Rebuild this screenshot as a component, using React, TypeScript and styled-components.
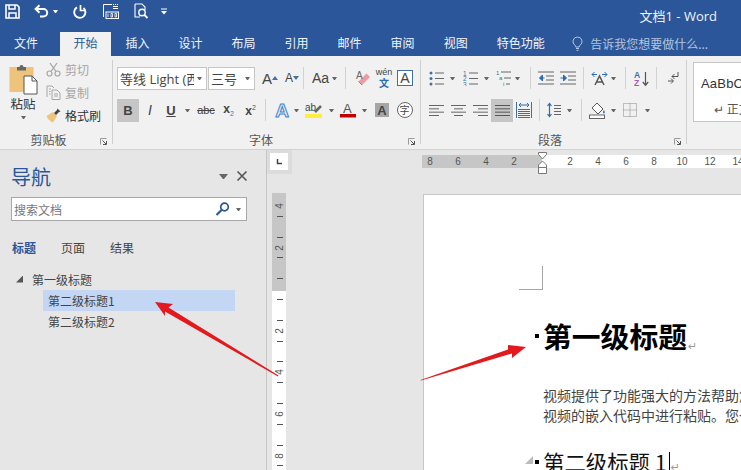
import React from "react";
import styled, { createGlobalStyle } from "styled-components";

const Global = createGlobalStyle`
  html, body { margin: 0; padding: 0; background: #e6e6e6; overflow: hidden; }
  * { box-sizing: border-box; }
`;

const CJK = `"Noto Sans CJK SC", "Open Sans", sans-serif`;
const LATIN = `"Open Sans", "Noto Sans CJK SC", sans-serif`;

const Root = styled.div`
  position: relative; width: 741px; height: 470px; overflow: hidden;
  display: flex; flex-direction: column; background: #e6e6e6; font-family: ${CJK};
  color: #444; font-size: 12px;
`;
const TitleBar = styled.div`
  height: 32px; flex: none; background: #2b579a; display: flex; align-items: center; color: #fff;
  padding-left: 5px; padding-bottom: 10px;
`;
const WindowTitle = styled.div`
  margin-left: auto; margin-right: 24px; margin-top: 8px; font-family: ${LATIN}; font-size: 13px; color: #f1f4f9; white-space: nowrap;
`;
const TabBar = styled.div`
  height: 24px; flex: none; background: #2b579a; display: flex; align-items: stretch;
`;
const Tab = styled.div<{ $active?: boolean; $first?: boolean }>`
  display: flex; align-items: center; font-size: 12px; white-space: nowrap;
  padding: ${(p) => (p.$first ? "0 22px 3px 14px" : p.$active ? "0 13.5px 3px" : "0 14.5px 3px")};
  background: ${(p) => (p.$active ? "#f1f1f1" : "transparent")};
  color: ${(p) => (p.$active ? "#2b579a" : "#f2f5fa")};
`;
const TellMe = styled.div`
  display: flex; align-items: center; gap: 7px; margin-left: 13px; padding-bottom: 2px; color: #b4c4de; font-size: 12px; white-space: nowrap;
`;
const Ribbon = styled.div`
  height: 94px; flex: none; background: #f1f1f1; border-bottom: 1px solid #d2d2d2; display: flex; align-items: stretch; overflow: hidden;
`;
const Group = styled.section<{ $w: number; $pl: number; $last?: boolean }>`
  width: ${(p) => p.$w}px; flex: none; padding: 10px 0 0 ${(p) => p.$pl}px; position: relative;
  display: flex; flex-direction: column;
  &::after {
    content: ""; position: absolute; right: 0; top: 4px; bottom: 5px; width: 1px; background: #cfcfcf;
    display: ${(p) => (p.$last ? "none" : "block")};
  }
`;
const Row = styled.div`
  display: flex; align-items: center; height: 24px; flex: none; margin-bottom: 8px;
`;
const Footer = styled.div`
  margin-top: auto; height: 18px; padding-bottom: 1px; display: flex; align-items: center; color: #555; font-size: 12px;
`;
const FooterLabel = styled.div`
  flex: 1; text-align: center;
`;
const Launcher = styled.div`
  width: 16px; flex: none; display: flex; justify-content: flex-start; padding-left: 3px; padding-top: 3px;
`;
const Slot = styled.div<{ $w: number; $ml?: number; $bg?: string; $h?: number }>`
  width: ${(p) => p.$w}px; height: ${(p) => p.$h ?? 23}px; margin-left: ${(p) => p.$ml ?? 0}px; flex: none;
  display: flex; align-items: center; justify-content: center; background: ${(p) => p.$bg ?? "transparent"};
`;
const Caret = styled.i<{ $ml?: number }>`
  display: block; flex: none; width: 5px; height: 3px; margin-left: ${(p) => p.$ml ?? 0}px;
  border-style: solid; border-width: 3px 2.5px 0; border-color: #666 transparent transparent;
`;
const Sep = styled.i<{ $ml?: number }>`
  display: block; flex: none; width: 1px; height: 22px; background: #d2d2d2; margin-left: ${(p) => p.$ml ?? 0}px;
`;
const ClipLayout = styled.div`
  display: flex; height: 64px; flex: none;
`;
const PasteColumn = styled.div`
  width: 38px; margin-left: 4px; margin-top: -2px; display: flex; flex-direction: column; align-items: center; flex: none; color: #333;
`;
const PasteLabel = styled.div`
  font-size: 12.5px; line-height: 18px; margin-bottom: 3px; color: #333;
`;
const ClipList = styled.div`
  margin-left: 4px; margin-top: -7px; display: flex; flex-direction: column; gap: 3px;
`;
const ClipItem = styled.div<{ $off?: boolean }>`
  display: flex; align-items: center; gap: 4px; height: 20px; font-size: 12px; white-space: nowrap;
  color: ${(p) => (p.$off ? "#a6a6a6" : "#333")};
`;
const ClipIcon = styled.div`
  width: 15px; flex: none; display: flex; justify-content: center;
`;
const Select = styled.div<{ $w: number; $ml?: number }>`
  width: ${(p) => p.$w}px; height: 23px; flex: none; margin-left: ${(p) => p.$ml ?? 0}px; background: #fff; border: 1px solid #c6c6c6;
  display: flex; align-items: center; padding: 0 4px 0 2px; color: #444; font-size: 13px; font-family: ${LATIN}; white-space: nowrap; overflow: hidden;
`;
const SelectText = styled.span`
  flex: 1; overflow: hidden; min-width: 0;
`;
const Glyph = styled.span<{ $size?: number; $color?: string; $weight?: number; $italic?: boolean; $under?: boolean; $strike?: boolean }>`
  font-family: "Liberation Sans", sans-serif; font-size: ${(p) => p.$size ?? 13}px; line-height: 1;
  color: ${(p) => p.$color ?? "#444"}; font-weight: ${(p) => p.$weight ?? 400};
  font-style: ${(p) => (p.$italic ? "italic" : "normal")};
  text-decoration: ${(p) => (p.$under ? "underline" : p.$strike ? "line-through" : "none")};
  white-space: nowrap;
`;
const Sub = styled.span`
  font-size: 7px; color: #2b7cd3; vertical-align: sub; font-weight: 400;
`;
const Sup = styled.span`
  font-size: 7px; color: #555; vertical-align: super; font-weight: 400;
`;
const BoxA = styled.span`
  width: 16px; height: 16px; border: 1px solid #41719c; background: #fff; display: flex; align-items: center; justify-content: center;
  font-family: "Liberation Sans", sans-serif; font-size: 14px; color: #444;
`;
const GreyA = styled.span`
  width: 14px; height: 14px; background: #a6a6a6; display: flex; align-items: center; justify-content: center;
  font-family: "Liberation Sans", sans-serif; font-weight: 700; font-size: 13px; color: #444;
`;
const CircleChar = styled.span`
  width: 16px; height: 16px; border: 1px solid #666; border-radius: 50%; display: flex; align-items: center; justify-content: center; font-size: 10px; line-height: 1; color: #444; background: #fff;
`;
const Wen = styled.span`
  display: flex; flex-direction: column; align-items: center; gap: 1px; font-family: "Liberation Sans", sans-serif; font-size: 9px; line-height: 9px; color: #444;
`;
const WenChar = styled.span`
  font-family: ${CJK}; color: #2b6cb0; font-size: 10px; line-height: 10px; font-weight: 700;
`;
const StylesBox = styled.div`
  width: 70px; height: 60px; margin-top: -4px; background: #fff; border: 1px solid #c6c6c6; display: flex; flex-direction: column;
  padding: 12px 0 0 7px; white-space: nowrap; overflow: hidden; color: #333;
`;
const StyleSample = styled.div`
  font-family: "Liberation Sans", sans-serif; font-size: 13px; line-height: 18px; letter-spacing: 0.2px;
`;
const StyleName = styled.div`
  margin-top: 8px; margin-left: 13px; font-size: 12px; line-height: 16px; color: #555;
`;
const Main = styled.div`
  flex: 1; min-height: 0; display: flex;
`;
const NavPanel = styled.aside`
  width: 267px; flex: none; border-right: 1px solid #c6c6c6; padding: 14px 19px 0 11px; background: #e6e6e6; display: flex; flex-direction: column;
`;
const NavHead = styled.div`
  display: flex; align-items: center; height: 26px; margin-right: -1px;
`;
const NavTitle = styled.div`
  font-size: 20px; line-height: 26px; color: #2b579a; flex: 1;
`;
const NavCaret = styled.i`
  display: block; width: 9px; height: 5px; margin-right: 8px; margin-top: -2px;
  border-style: solid; border-width: 5px 4.5px 0; border-color: #666 transparent transparent;
`;
const NavClose = styled.div`
  width: 12px; height: 12px; display: flex; margin-top: -2px;
`;
const SearchBox = styled.div`
  margin-top: 7px; width: 236px; height: 24px; background: #fff; border: 1px solid #a8a8a8; display: flex; align-items: center; padding: 0 5px 0 2px; color: #777; font-size: 12px;
`;
const SearchText = styled.span`
  flex: 1;
`;
const NavTabs = styled.div`
  display: flex; gap: 25px; margin-top: 16px; height: 20px; align-items: center; margin-left: 1px; color: #444;
`;
const NavTab = styled.span<{ $active?: boolean }>`
  font-size: 12px; color: ${(p) => (p.$active ? "#2b579a" : "#444")}; font-weight: ${(p) => (p.$active ? 700 : 400)};
`;
const Tree = styled.div`
  margin-top: 11px; display: flex; flex-direction: column; font-size: 12px; color: #444;
`;
const TreeRoot = styled.div`
  display: flex; align-items: center; height: 22px; padding-left: 5px;
`;
const TreeTriangle = styled.i`
  display: block; width: 7px; height: 7px; margin-right: 9px; background: #555; clip-path: polygon(100% 0, 100% 100%, 0 100%);
`;
const TreeItem = styled.div<{ $sel?: boolean }>`
  height: 21px; margin-left: 32px; width: 192px; padding-left: 5px; display: flex; align-items: center;
  background: ${(p) => (p.$sel ? "#c3d6f3" : "transparent")};
`;
const Workspace = styled.div`
  flex: 1; min-width: 0; display: flex; background: #e6e6e6;
`;
const SideRuler = styled.div`
  width: 155px; flex: none; display: flex; flex-direction: column;
`;
const Corner = styled.div`
  width: 25px; height: 24px; background: #dcdcdc; display: flex; padding: 3px 0 0 3px;
`;
const CornerInner = styled.div`
  width: 18px; height: 17px; background: #fff; display: flex; align-items: center; justify-content: center;
`;
const VRuler = styled.div`
  width: 14px; margin-left: 5px; margin-top: 19px; flex: 1; padding-top: 3px;
  background: linear-gradient(to bottom, #c6c6c6 98px, #fff 98px);
  overflow: hidden;
`;
const VCell = styled.div`
  display: grid; grid-template-rows: 19.8px 1px 19.8px 1px; justify-items: center; height: 41.6px;
`;
const VLabel = styled.span`
  font-family: "Liberation Sans", sans-serif; font-size: 10px; line-height: 19.8px; color: #555; display: block; margin-left: 1px; transform: rotate(-90deg);
`;
const VTick = styled.i`
  display: block; width: 6px; height: 1px; background: #555; margin-left: 2px;
`;
const PageColumn = styled.div`
  flex: 1; min-width: 0; display: flex; flex-direction: column; overflow: hidden;
`;
const HRuler = styled.div`
  height: 13px; margin-top: 5px; flex: none; background: linear-gradient(to right, #c6c6c6 120px, #fff 120px); position: relative;
`;
const HCells = styled.div`
  display: flex; margin-left: -6px; height: 13px;
`;
const HCell = styled.span`
  width: 28px; flex: none; text-align: center; font-family: "Liberation Sans", sans-serif; font-size: 10px; line-height: 13px; color: #555;
`;
const Marker = styled.div`
  position: absolute; left: 116px; top: -3px; width: 9px;
`;
const Page = styled.div`
  margin: 26px 0 0 1px; flex: 1; background: #fff; border-top: 1px solid #c6c6c6; border-left: 1px solid #c6c6c6; padding: 71px 0 0 95px; white-space: nowrap; color: #333;
`;
const CropMark = styled.div`
  width: 24px; height: 24px; border-right: 1px solid #a6a6a6; border-bottom: 1px solid #a6a6a6;
`;
const Body = styled.div`
  margin-left: 24px;
`;
const H1 = styled.h1`
  margin: 26px 0 0 -8px; display: flex; align-items: center; height: 40px; font-size: 28.8px; font-weight: 700; color: #000; line-height: 40px;
`;
const Bullet = styled.i`
  display: block; width: 4px; height: 4px; background: #000; margin-right: 4px; flex: none;
`;
const Para = styled.p`
  margin: 29px 0 0; font-size: 14px; line-height: 20px; color: #444;
`;
const H2 = styled.h2`
  margin: 22px 0 0 -8px; display: flex; align-items: center; height: 30px; font-size: 21.4px; font-weight: 400; color: #111; line-height: 30px; position: relative;
`;
const Fold = styled.i`
  position: absolute; left: -10px; top: 9px; width: 8px; height: 8px; background: #bbb; clip-path: polygon(100% 0, 100% 100%, 0 100%);
`;
const Cursor = styled.i`
  display: inline-block; width: 1px; height: 20px; background: #000; margin-left: 2px; flex: none;
`;
const Ret = styled.span<{ $s: number }>`
  font-family: "DejaVu Sans", sans-serif; font-size: ${(p) => p.$s}px; color: #999; font-weight: 400; margin-left: 1px; align-self: flex-end; line-height: 1.6;
`;
const ArrowLayer = styled.svg`
  position: absolute; left: 0; top: 0; pointer-events: none;
`;

const S = (p: { w: number; h?: number; children: React.ReactNode }) => (
  <svg width={p.w} height={p.h ?? p.w} viewBox={`0 0 ${p.w} ${p.h ?? p.w}`} fill="none" style={{ display: "block", flex: "none" }}>
    {p.children}
  </svg>
);

const Save = () => (
  <S w={15}><path d="M1 1h11l2 2v11H1z" stroke="#fff" strokeWidth="1.6" /><path d="M4 1v4h6V1M4 14V9h7v5" stroke="#fff" strokeWidth="1.5" /></S>
);
const Undo = () => (
  <S w={15}><path d="M2 5h7.5a3.6 3.6 0 0 1 0 7.4H6" stroke="#fff" strokeWidth="2" /><path d="M5.5 1.2 1.6 5l3.9 3.8" stroke="#fff" strokeWidth="2" /></S>
);
const Redo = () => (
  <S w={15}><path d="M5 3.4A5.6 5.6 0 1 0 11.5 4" stroke="#fff" strokeWidth="1.9" /><path d="M8.5 1v5.5H14" stroke="#fff" strokeWidth="1.7" /></S>
);
const Page100 = () => (
  <S w={17}>
    <path d="M1.5 14V1.5h8.5" stroke="#fff" />
    <path d="M11 1h1v1h-1zM13 1h1v1h-1zM15 1h1v1h-1zM11 3h5v1h-5zM11 5h5v1h-5z" fill="#fff" />
    <rect x="4" y="9" width="12.5" height="6.5" stroke="#fff" />
    <path d="M6 10.5v3.5M9 10.5h1.5v3.5H9zM13 10.5h1.5v3.5H13z" stroke="#fff" strokeWidth=".8" />
  </S>
);
const Preview = () => (
  <S w={16}>
    <path d="M2 1h7l3 3v3M2 1v13h5" stroke="#fff" strokeWidth="1.1" />
    <circle cx="9" cy="9.5" r="3.2" stroke="#fff" strokeWidth="1.4" />
    <path d="m11.3 11.8 3.2 3.2" stroke="#fff" strokeWidth="1.9" />
  </S>
);
const QatMore = () => (
  <S w={6} h={7}><path d="M0 1h6" stroke="#fff" /><path d="M0 3h6L3 6.5z" fill="#fff" /></S>
);
const Bulb = () => (
  <S w={11} h={15}><path d="M5.5 1a4.5 4.5 0 0 1 2.6 8.2c-.7.5-.9 1-.9 1.8H3.8c0-.8-.2-1.3-.9-1.8A4.5 4.5 0 0 1 5.5 1z" stroke="#b4c4de" /><path d="M4 12.5h3M4.5 14.3h2" stroke="#b4c4de" /></S>
);
const PasteIcon = () => (
  <S w={29} h={31}>
    <rect x="0.5" y="3" width="24" height="25" fill="#eec47c" />
    <path d="M8 3h2.5a2 2 0 0 1 4 0H17v3.5H8z" fill="#666" />
    <path d="M15 12h8l5 5v13H15z" fill="#fff" stroke="#555" />
    <path d="M23 12v5h5" stroke="#555" />
  </S>
);
const Scissors = () => (
  <S w={15}><circle cx="3.5" cy="11.5" r="2.5" stroke="#a6a6a6" strokeWidth="1.2" /><circle cx="11.5" cy="11.5" r="2.5" stroke="#a6a6a6" strokeWidth="1.2" /><path d="M5 9.5 11 1M10 9.5 4 1" stroke="#a6a6a6" strokeWidth="1.3" /></S>
);
const CopyI = () => (
  <S w={15}><path d="M1 12V1h5l2 2" stroke="#a6a6a6" /><path d="M6 5h5l3 3v6.5H6z" stroke="#a6a6a6" /><path d="M3 4h2M3 6.5h1.5M3 9h1.5M8 9h4M8 11h4" stroke="#a6a6a6" /></S>
);
const Brush = () => (
  <S w={15}><path d="M.5 8 7 4l4 4-4 6.5C5 14 1.5 11 .5 8z" fill="#eec47c" /><path d="m8 5 3-3 .5-1.5 3 3L13 4 10 7z" fill="#444" /></S>
);
const LaunchIcon = () => (
  <S w={7}><path d="M.5 6.5v-6h6" stroke="#999" /><path d="m2.5 2.5 3.500 3.500M6.500 3v3.500H3" stroke="#555" /></S>
);
const Grow = () => (
  <S w={6} h={4}><path d="M3 0 6 4H0z" fill="#41719c" /></S>
);
const Shrink = () => (
  <S w={6} h={4}><path d="M3 4 6 0H0z" fill="#41719c" /></S>
);
const Eraser = () => (
  <S w={16} h={17}>
    <path d="M7 15 15 7l-3.500-3.500L3.500 11.500z" fill="#ee9aa2" />
    <path d="m3.500 11.500 3.500 3.500" stroke="#d66" />
    <text x="1" y="9" fontFamily="Liberation Sans" fontSize="10" fill="#666">A</text>
  </S>
);
const TextEffect = () => (
  <Glyph $size={19} $color="#dcebf9" style={{ WebkitTextStroke: "1px #3f84c8", fontWeight: 700 }}>A</Glyph>
);
const Lines = ({ rows, w = 15, color = "#666" }: { rows: [number, number][]; w?: number; color?: string }) => (
  <S w={w} h={13}>
    {rows.map(([a, b], i) => (
      <path key={i} d={`M${a} ${1.5 + (i * 10) / (rows.length - 1)}H${b}`} stroke={color} />
    ))}
  </S>
);
const BulletsI = () => (
  <S w={15} h={15}>
    {[2, 7.5, 13].map((y) => (
      <g key={y}><circle cx="2" cy={y} r="1.5" fill="#41719c" /><path d={`M6 ${y}h9`} stroke="#666" /></g>
    ))}
  </S>
);
const NumbersI = () => (
  <S w={15} h={15}>
    {[2, 7.5, 13].map((y, i) => (
      <g key={y}>
        <text x="0" y={y + 2.5} fontFamily="Liberation Sans" fontSize="6.5" fill="#41719c">{i + 1}</text>
        <path d={`M6 ${y}h9`} stroke="#666" />
      </g>
    ))}
  </S>
);
const MultiI = () => (
  <S w={15} h={16}>
    <text x="0" y="5" fontFamily="Liberation Sans" fontSize="6" fill="#41719c">1</text>
    <path d="M5 2h10" stroke="#666" />
    <text x="3" y="10" fontFamily="Liberation Sans" fontSize="6" fill="#41719c">a</text>
    <path d="M8 8h7" stroke="#666" />
    <text x="7" y="15.5" fontFamily="Liberation Sans" fontSize="6" fill="#41719c">i</text>
    <path d="M10 14h4" stroke="#666" />
  </S>
);
const IndentI = ({ out }: { out?: boolean }) => (
  <S w={16} h={14}>
    <path d="M0 1h16M0 13h16M8 5h8M8 9h8" stroke="#666" />
    {out ? <path d="M6.5 7H2M4.5 4 1.5 7l3 3z" stroke="#2b6cb0" fill="#2b6cb0" /> : <path d="M.5 7H5M3.5 4l3 3-3 3z" stroke="#2b6cb0" fill="#2b6cb0" />}
  </S>
);
const TextDir = () => (
  <S w={17} h={15}>
    <path d="M1 3.5h5M11 3.5h5" stroke="#2b6cb0" />
    <path d="M3.5 1 1 3.5 3.5 6M13.5 1 16 3.5 13.5 6" stroke="#2b6cb0" />
    <path d="M4 14 8.5 5l4.5 9M5.5 11h6" stroke="#555" strokeWidth="1.5" />
  </S>
);
const Sort = () => (
  <S w={15} h={17}>
    <text x="0" y="7.5" fontFamily="Liberation Sans" fontSize="8.5" fontWeight="700" fill="#41719c">A</text>
    <text x="0" y="16" fontFamily="Liberation Sans" fontSize="8.5" fontWeight="700" fill="#a05fb5">Z</text>
    <path d="M11.5 2v13M8.8 12l2.700 3.200 2.700-3.200" stroke="#555" strokeWidth="1.2" />
  </S>
);
const Ltr = () => (
  <S w={12} h={15}>
    <path d="M11 1v4.5H5M7.5 3 5 5.5 7.5 8" stroke="#555" />
    <path d="M1 10h5M4 7.5 6.5 10 4 12.5" stroke="#555" />
  </S>
);
const Dist = () => (
  <S w={16} h={16}>
    <path d="M.5 0v16M15.5 0v16" stroke="#41719c" />
    <path d="M3 3h10M5 1 3 3l2 2M11 1l2 2-2 2" stroke="#2b6cb0" />
    <path d="M2 7.5h12M2 9.5h12M2 11.5h12M2 13.5h12M2 15.5h12" stroke="#666" />
  </S>
);
const Spacing = () => (
  <S w={14} h={16}>
    <path d="M2.5 1.5v13M.5 4l2-2.500L4.500 4M.5 12l2 2.500 2-2.500" stroke="#2b6cb0" strokeWidth="1.2" />
    <path d="M7 3.5h7M7 6.5h7M7 9.5h7M7 12.5h7" stroke="#666" />
  </S>
);
const Shade = () => (
  <S w={17} h={17}>
    <path d="M8 1 14 7l-5 5-6-6z" fill="#fff" stroke="#555" />
    <path d="M15 8c-1 1.5-1.5 2.5-.5 3.2s2-.7.5-3.2z" fill="#2b6cb0" />
    <rect x="0.5" y="13" width="15" height="3.5" fill="#fff" stroke="#666" />
  </S>
);
const BordersI = () => (
  <S w={14}>
    <path d="M.5.5h13v13H.5zM7 .5v13M.5 7h13" stroke="#888" strokeDasharray="1 1" />
  </S>
);
const SearchGlass = () => (
  <S w={15} h={14}>
    <circle cx="9.5" cy="5" r="3.8" stroke="#2b579a" strokeWidth="1.7" />
    <path d="M6.5 8 1.5 13" stroke="#2b579a" strokeWidth="2.2" />
  </S>
);

const Hourglass = () => (
  <svg width="9" height="22" viewBox="0 0 9 22" fill="none" style={{ display: "block" }}>
    <path d="M.5.5h8v2L4.500 7 .5 2.500z" fill="#fff" stroke="#777" />
    <path d="M4.500 9 8.500 13v2.500h-8V13z" fill="#fff" stroke="#777" />
    <path d="M.5 15.500h8v6h-8z" fill="#fff" stroke="#777" />
  </svg>
);

const tabs = ["插入", "设计", "布局", "引用", "邮件", "审阅", "视图", "特色功能"];
const al: [number, number][] = [[0, 15], [0, 10], [0, 15], [0, 10]];
const ac: [number, number][] = [[0, 15], [3, 12], [0, 15], [3, 12]];
const ar: [number, number][] = [[0, 15], [5, 15], [0, 15], [5, 15]];
const aj: [number, number][] = [[0, 15], [0, 15], [0, 15], [0, 15]];

export default function App() {
  return (
    <Root>
      <Global />
      <TitleBar>
        <Slot $w={15}><Save /></Slot>
        <Slot $w={15} $ml={14}><Undo /></Slot>
        <Caret $ml={4} style={{ borderTopColor: "#fff" }} />
        <Slot $w={15} $ml={14}><Redo /></Slot>
        <Slot $w={17} $ml={15}><Page100 /></Slot>
        <Slot $w={16} $ml={14}><Preview /></Slot>
        <Slot $w={6} $ml={12}><QatMore /></Slot>
        <WindowTitle>文档1 - Word</WindowTitle>
      </TitleBar>
      <TabBar>
        <Tab $first>文件</Tab>
        <Tab $active>开始</Tab>
        {tabs.map((t) => <Tab key={t}>{t}</Tab>)}
        <TellMe><Bulb />告诉我您想要做什么...</TellMe>
      </TabBar>
      <Ribbon>
        <Group $w={113} $pl={0}>
          <ClipLayout>
            <PasteColumn>
              <PasteIcon />
              <PasteLabel>粘贴</PasteLabel>
              <Caret />
            </PasteColumn>
            <ClipList>
              <ClipItem $off><ClipIcon><Scissors /></ClipIcon>剪切</ClipItem>
              <ClipItem $off><ClipIcon><CopyI /></ClipIcon>复制</ClipItem>
              <ClipItem><ClipIcon><Brush /></ClipIcon>格式刷</ClipItem>
            </ClipList>
          </ClipLayout>
          <Footer><FooterLabel>剪贴板</FooterLabel><Launcher><LaunchIcon /></Launcher></Footer>
        </Group>
        <Group $w={308} $pl={4}>
          <Row>
            <Select $w={90}><SelectText>等线 Light (西文</SelectText><Caret $ml={3} /></Select>
            <Select $w={47} $ml={1}><SelectText>三号</SelectText><Caret /></Select>
            <Slot $w={18} $ml={6}><Glyph $size={15}>A</Glyph><Grow /></Slot>
            <Slot $w={16} $ml={5}><Glyph $size={12}>A</Glyph><Shrink /></Slot>
            <Sep $ml={3} />
            <Slot $w={19} $ml={7}><Glyph $size={14}>Aa</Glyph></Slot>
            <Caret $ml={2} />
            <Sep $ml={8} />
            <Slot $w={16} $ml={9}><Eraser /></Slot>
            <Slot $w={16} $ml={5}><Wen>wén<WenChar>文</WenChar></Wen></Slot>
            <Slot $w={16} $ml={5}><BoxA>A</BoxA></Slot>
          </Row>
          <Row>
            <Slot $w={22} $bg="#c6c6c6"><Glyph $size={13} $weight={700}>B</Glyph></Slot>
            <Slot $w={16} $ml={3}><Glyph $size={14} $italic>I</Glyph></Slot>
            <Slot $w={16} $ml={5}><Glyph $size={13} $weight={700} $under>U</Glyph></Slot>
            <Caret $ml={6} />
            <Slot $w={16} $ml={8}><Glyph $size={11} $strike>abc</Glyph></Slot>
            <Slot $w={13} $ml={8}><Glyph $size={12} $weight={700}>x<Sub>2</Sub></Glyph></Slot>
            <Slot $w={13} $ml={9}><Glyph $size={12} $weight={700}>x<Sup>2</Sup></Glyph></Slot>
            <Sep $ml={8} />
            <Slot $w={16} $ml={8}><TextEffect /></Slot>
            <Caret $ml={4} />
            <Slot $w={17} $ml={6}>
              <S w={17} h={17}>
                <text x="0" y="9" fontFamily="Liberation Sans" fontSize="10" fill="#444">ab</text>
                <path d="m10 10 6-6" stroke="#666" strokeWidth="2.5" />
                <rect x="0" y="12" width="17" height="4" fill="#ffef3a" />
              </S>
            </Slot>
            <Caret $ml={7} />
            <Slot $w={16} $ml={6}>
              <S w={16} h={16}>
                <text x="3" y="11" fontFamily="Liberation Sans" fontSize="13" fill="#555">A</text>
                <rect x="0" y="12" width="16" height="3.5" fill="#c00000" />
              </S>
            </Slot>
            <Caret $ml={6} />
            <Slot $w={14} $ml={8}><GreyA>A</GreyA></Slot>
            <Slot $w={17} $ml={7}><CircleChar>字</CircleChar></Slot>
          </Row>
          <Footer><FooterLabel>字体</FooterLabel><Launcher><LaunchIcon /></Launcher></Footer>
        </Group>
        <Group $w={266} $pl={8}>
          <Row>
            <Slot $w={15}><BulletsI /></Slot>
            <Caret $ml={6} />
            <Slot $w={15} $ml={8}><NumbersI /></Slot>
            <Caret $ml={6} />
            <Slot $w={15} $ml={7}><MultiI /></Slot>
            <Caret $ml={4} />
            <Sep $ml={10} />
            <Slot $w={15} $ml={7}><IndentI out /></Slot>
            <Slot $w={16} $ml={7}><IndentI /></Slot>
            <Sep $ml={7} />
            <Slot $w={17} $ml={7}><TextDir /></Slot>
            <Caret $ml={3} />
            <Sep $ml={9} />
            <Slot $w={15} $ml={8}><Sort /></Slot>
            <Sep $ml={7} />
            <Slot $w={12} $ml={10}><Ltr /></Slot>
          </Row>
          <Row>
            <Slot $w={15}><Lines rows={al} /></Slot>
            <Slot $w={15} $ml={7}><Lines rows={ac} /></Slot>
            <Slot $w={15} $ml={7}><Lines rows={ar} /></Slot>
            <Slot $w={22} $ml={3} $bg="#c6c6c6"><Lines rows={aj} color="#555" /></Slot>
            <Slot $w={16} $ml={3}><Dist /></Slot>
            <Sep $ml={7} />
            <Slot $w={14} $ml={7}><Spacing /></Slot>
            <Caret $ml={6} />
            <Sep $ml={9} />
            <Slot $w={17} $ml={7}><Shade /></Slot>
            <Caret $ml={5} />
            <Slot $w={14} $ml={7}><BordersI /></Slot>
            <Caret $ml={8} />
          </Row>
          <Footer><FooterLabel>段落</FooterLabel><Launcher><LaunchIcon /></Launcher></Footer>
        </Group>
        <Group $w={60} $pl={6} $last>
          <StylesBox>
            <StyleSample>AaBbCcDc</StyleSample>
            <StyleName>↵ 正文</StyleName>
          </StylesBox>
        </Group>
      </Ribbon>
      <Main>
        <NavPanel>
          <NavHead>
            <NavTitle>导航</NavTitle>
            <NavCaret />
            <NavClose>
              <S w={12}><path d="m1.5 1.5 9 9M10.5 1.5l-9 9" stroke="#555" strokeWidth="1.6" /></S>
            </NavClose>
          </NavHead>
          <SearchBox>
            <SearchText>搜索文档</SearchText>
            <SearchGlass />
            <Caret $ml={6} />
          </SearchBox>
          <NavTabs>
            <NavTab $active>标题</NavTab>
            <NavTab>页面</NavTab>
            <NavTab>结果</NavTab>
          </NavTabs>
          <Tree>
            <TreeRoot><TreeTriangle />第一级标题</TreeRoot>
            <TreeItem $sel>第二级标题1</TreeItem>
            <TreeItem>第二级标题2</TreeItem>
          </Tree>
        </NavPanel>
        <Workspace>
          <SideRuler>
            <Corner>
              <CornerInner>
                <S w={7}><path d="M1.5 1v4.5H6" stroke="#444" strokeWidth="1.5" /></S>
              </CornerInner>
            </Corner>
            <VRuler>
              {["4", "2", "", "2", "4", "6", "8"].map((l, i) => (
                <VCell key={i}>
                  <VLabel>{l}</VLabel>
                  <VTick />
                  <span />
                  <VTick />
                </VCell>
              ))}
            </VRuler>
          </SideRuler>
          <PageColumn>
            <HRuler>
              <HCells>
                {["8", "6", "4", "2", "", "2", "4", "6", "8", "10", "12", "14"].map((l, i) => (
                  <HCell key={i}>{l}</HCell>
                ))}
              </HCells>
              <Marker><Hourglass /></Marker>
            </HRuler>
            <Page>
              <CropMark />
              <Body>
                <H1><Bullet />第一级标题<Ret $s={11}>↵</Ret></H1>
                <Para>视频提供了功能强大的方法帮助您证明您的观点。<br />视频的嵌入代码中进行粘贴。您也可以键入一个</Para>
                <H2><Fold /><Bullet />第二级标题 1<Cursor /><Ret $s={11}>↵</Ret></H2>
              </Body>
            </Page>
          </PageColumn>
        </Workspace>
      </Main>
      <ArrowLayer width="741" height="470" viewBox="0 0 741 470">
        <path d="M155 302 173 304 168.5 307.5 278.5 375.5 278 376.5 165 311.5 165 316z" fill="#e3191e" />
        <path d="M526 347 512 358 512 353.5 421 380.5 420.500 380 508 349.5 508 345z" fill="#e3191e" />
      </ArrowLayer>
    </Root>
  );
}
